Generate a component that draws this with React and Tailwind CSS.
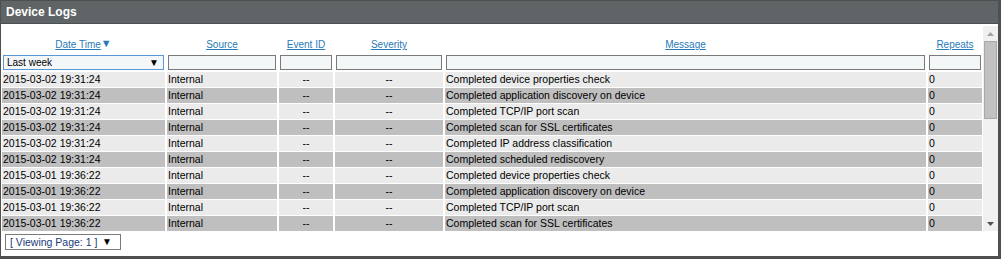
import React from "react";

const cols = "grid grid-cols-[163px_110px_54px_108px_481px_54px] gap-x-[2px] pl-[1px]";

const rows = [
  ["2015-03-02 19:31:24", "Completed device properties check"],
  ["2015-03-02 19:31:24", "Completed application discovery on device"],
  ["2015-03-02 19:31:24", "Completed TCP/IP port scan"],
  ["2015-03-02 19:31:24", "Completed scan for SSL certificates"],
  ["2015-03-02 19:31:24", "Completed IP address classification"],
  ["2015-03-02 19:31:24", "Completed scheduled rediscovery"],
  ["2015-03-01 19:36:22", "Completed device properties check"],
  ["2015-03-01 19:36:22", "Completed application discovery on device"],
  ["2015-03-01 19:36:22", "Completed TCP/IP port scan"],
  ["2015-03-01 19:36:22", "Completed scan for SSL certificates"],
];

function HeadLink({ children, arrow }) {
  return (
    <div className="flex items-end justify-center pb-[3px]">
      <span className="text-[10px] leading-[12px] text-[#2a7ab8] underline underline-offset-[1px]">{children}</span>
      {arrow && <span className="text-[11px] leading-[12px] text-[#2a7ab8] relative -top-[2px]">▼</span>}
    </div>
  );
}

function FilterBox() {
  return <div className="h-[15px] mt-[1px] mx-[1px] border border-[#7a7a7a] bg-[#f4f7f8]" />;
}

export default function App() {
  return (
    <div className="w-[1001px] h-[259px] bg-white border-t border-l border-[#4f4f4f] border-r-[3px] border-b-[3px] flex flex-col overflow-hidden" style={{ fontFamily: '"Liberation Sans", Arial, sans-serif' }}>
      <div className="h-[23px] shrink-0 bg-[#5f6566] border-b border-[#4a5050] flex items-center pl-[5px]">
        <span className="text-white font-bold text-[12px]">Device Logs</span>
      </div>

      <div className="flex h-[207px] shrink-0 pt-[2px]">
        <div className="flex-1 overflow-hidden">
          <div className={`${cols} h-[28px]`}>
            <HeadLink arrow>Date Time</HeadLink>
            <HeadLink>Source</HeadLink>
            <HeadLink>Event ID</HeadLink>
            <HeadLink>Severity</HeadLink>
            <HeadLink>Message</HeadLink>
            <HeadLink>Repeats</HeadLink>
          </div>

          <div className={`${cols} h-[18px]`}>
            <div className="h-[15px] mt-[1px] mx-[1px] border border-[#5b97d6] bg-[#f4f7f8] flex items-center justify-between pl-[3px] pr-[4px]">
              <span className="text-[10px] leading-none text-black">Last week</span>
              <span className="text-[10px] leading-none text-black">▼</span>
            </div>
            <FilterBox />
            <FilterBox />
            <FilterBox />
            <FilterBox />
            <FilterBox />
          </div>

          <div className="flex flex-col gap-y-[1px]">
            {rows.map(([date, msg], i) => {
              const bg = i % 2 === 0 ? "bg-[#ebebeb]" : "bg-[#bfbfbf]";
              return (
                <div key={i} className={`${cols} h-[15px] text-[10.5px] leading-[15px] text-black`}>
                  <div className={`${bg} pl-[1px] whitespace-nowrap`}>{date}</div>
                  <div className={`${bg} pl-[1px]`}>Internal</div>
                  <div className={`${bg} text-center`}>--</div>
                  <div className={`${bg} text-center`}>--</div>
                  <div className={`${bg} pl-[1px]`}>{msg}</div>
                  <div className={`${bg} pl-[1px]`}>0</div>
                </div>
              );
            })}
          </div>
        </div>

        <div className="w-[15px] shrink-0 bg-[#f0f0f0] flex flex-col items-center">
          <div className="h-[15px] flex items-center justify-center">
            <svg width="7" height="4" viewBox="0 0 7 4"><path d="M3.5 0 L7 4 L0 4 Z" fill="#a3a3a3" /></svg>
          </div>
          <div className="w-[13px] h-[78px] bg-[#c1c1c1] border border-[#a8a8a8]" />
          <div className="flex-1" />
          <div className="h-[15px] flex items-center justify-center">
            <svg width="7" height="4" viewBox="0 0 7 4"><path d="M0 0 L7 0 L3.5 4 Z" fill="#505050" /></svg>
          </div>
        </div>
      </div>

      <div className="pl-[4px] pt-[3px]">
        <div className="w-[116px] h-[16px] border border-[#7a7a7a] flex items-center justify-between pl-[4px] pr-[8px] whitespace-nowrap">
          <span className="text-[10.5px] leading-none text-[#1b3a78]">[ Viewing Page: 1 ]</span>
          <span className="text-[10px] leading-none text-black">▼</span>
        </div>
      </div>
    </div>
  );
}
